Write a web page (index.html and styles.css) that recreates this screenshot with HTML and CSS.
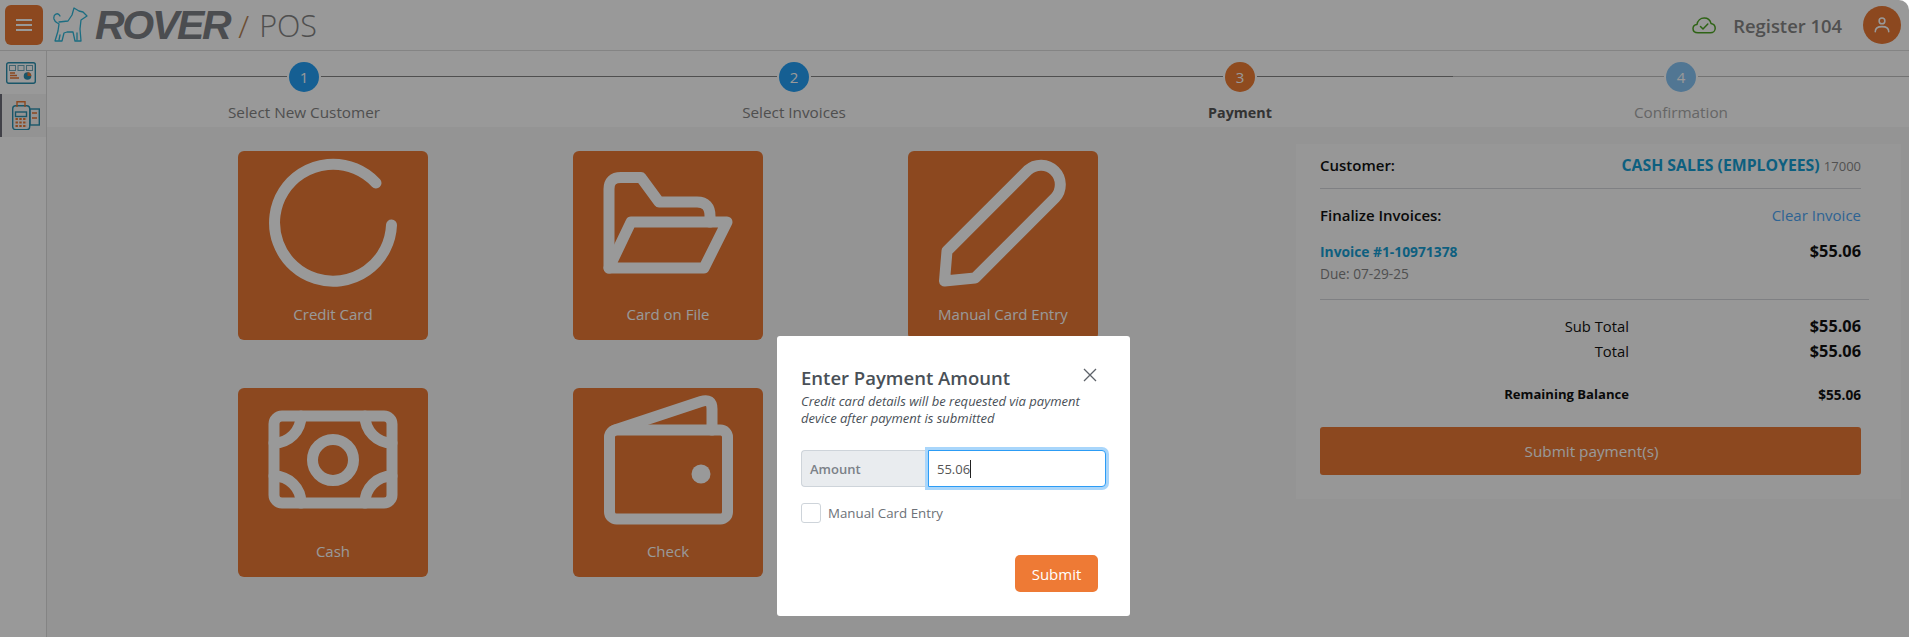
FILE: index.html
```html
<!DOCTYPE html>
<html lang="en">
  <head>
    <meta charset="UTF-8" />
    <meta name="viewport" content="width=device-width, initial-scale=1.0" />
    <title>Rover POS - Payment</title>
    <link rel="stylesheet" href="styles.css">
  </head>
  <body>
    <header class="topbar">
      <button class="menu-btn" aria-label="Menu">
        <span></span><span></span><span></span>
      </button>
      <svg class="dog" viewBox="0 0 36 36" fill="none" stroke-linejoin="round" stroke-linecap="round">
        <path d="M7 9 C5 5 0 7 1 12 C2 16 5 16 6 17 L5 24 L2 34 L9 34 L11 26 L14 25 L20 25 L22 34 L28 34 L27 22 L28 13 L34 9 L30 5 L26 4 L21 1 L19 8 L15 14 L6 15" />
        <path d="M6 33 L7 28 M24 33 L24 26" />
      </svg>
      <div class="brand">
        <span class="brand-name">ROVER</span>
        <span class="brand-slash">/</span>
        <span class="brand-pos">POS</span>
      </div>
      <div class="topbar-right">
        <svg class="cloud" viewBox="0 0 24 17" fill="none" stroke-linejoin="round" stroke-linecap="round">
          <path d="M6 15.8 C3 15.8 1 14 1 11.5 C1 9.2 2.8 7.6 5 7.4 C5.6 3.6 8.6 1 12.2 1 C15.6 1 18.2 3.2 19 6.4 C21.4 6.8 23.2 8.8 23.2 11.2 C23.2 13.8 21.2 15.8 18.4 15.8 Z" />
          <path d="M8.5 9.5 L11 12 L15.8 7" />
        </svg>
        <span class="register">Register 104</span>
        <div class="avatar">
          <svg viewBox="0 0 20 20" fill="none" stroke-linecap="round">
            <circle cx="10" cy="5.5" r="3.2" />
            <path d="M2.5 17.5 C2.5 13.5 5.5 11.8 10 11.8 C14.5 11.8 17.5 13.5 17.5 17.5" />
          </svg>
        </div>
      </div>
    </header>

    <div class="layout">
      <aside class="sidebar">
        <a class="side-item">
          <svg viewBox="0 0 30 22" width="30" height="22">
            <rect x="0.7" y="0.7" width="28.6" height="20.6" rx="2" class="ic-frame" />
            <rect x="3.5" y="3.5" width="6" height="5" class="ic-thin" />
            <rect x="12" y="3.5" width="6" height="5" class="ic-thin" />
            <rect x="20.5" y="3.5" width="6" height="5" class="ic-thin" />
            <path d="M4 11 H9 M4 13.5 H11 M4 16 H13" class="ic-orange" />
            <circle cx="21.5" cy="14" r="3.8" fill="#2a8fb0" />
            <path d="M21.5 14 V10.2 A3.8 3.8 0 0 1 25.3 14 Z" fill="#e97834" />
          </svg>
        </a>
        <a class="side-item active">
          <svg viewBox="0 0 28 29" width="28" height="29">
            <rect x="0.7" y="4.7" width="17" height="24" rx="3" class="ic-frame" />
            <rect x="18" y="8" width="9.3" height="16" class="ic-frame" />
            <path d="M5 6 V0.7 H13 V6" class="ic-orange" />
            <rect x="3.5" y="11" width="11" height="4.5" class="ic-frame" />
            <path d="M3.5 18 H15 M3.5 21.5 H15 M3.5 25 H15" class="ic-dots" />
            <path d="M20 12 H25 M20 17 H25" class="ic-orange" />
          </svg>
        </a>
      </aside>

      <main class="main">
        <div class="stepper">
          <div class="step done">
            <div class="step-num">1</div>
            <div class="step-label">Select New Customer</div>
          </div>
          <div class="step done">
            <div class="step-num">2</div>
            <div class="step-label">Select Invoices</div>
          </div>
          <div class="step current">
            <div class="step-num">3</div>
            <div class="step-label">Payment</div>
          </div>
          <div class="step todo">
            <div class="step-num">4</div>
            <div class="step-label">Confirmation</div>
          </div>
        </div>

        <div class="content">
          <div class="tiles">
            <div class="tile">
              <svg class="tile-icon" viewBox="0 0 130 130">
                <path d="M108 25 A58.5 58.5 0 1 0 123.5 67" />
              </svg>
              <span>Credit Card</span>
            </div>
            <div class="tile">
              <svg class="tile-icon" viewBox="0 0 130 130">
                <path d="M6 110 V31 Q6 19.5 18 19.5 H38 L56 44 H94 Q107 44 107 58 V64" />
                <path d="M28 64 H124 L101 110 H6 Z" />
              </svg>
              <span>Card on File</span>
            </div>
            <div class="tile">
              <svg class="tile-icon" viewBox="0 0 130 130">
                <path d="M6.5 123 L9 93 L89.9 12.2 A19.4 19.4 0 0 1 117.3 39.6 L37 120 Z" />
              </svg>
              <span>Manual Card Entry</span>
            </div>
            <div class="tile">
              <svg class="tile-icon" viewBox="0 0 130 130">
                <rect x="6" y="21" width="118" height="87" rx="8" />
                <circle cx="65" cy="65" r="20.5" />
                <path d="M33 21 A27 27 0 0 1 6 48 M97 21 A27 27 0 0 0 124 48 M6 81 A27 27 0 0 1 33 108 M124 81 A27 27 0 0 0 97 108" />
              </svg>
              <span>Cash</span>
            </div>
            <div class="tile">
              <svg class="tile-icon" viewBox="0 0 130 130">
                <rect x="6.5" y="35" width="118" height="89" rx="7" />
                <path d="M12 35 L98 6.5 Q109 3 109 14 V35" />
                <circle cx="98" cy="79" r="9.5" class="dot" />
              </svg>
              <span>Check</span>
            </div>
          </div>

          <section class="summary">
            <div class="row customer-row">
              <span class="strong">Customer:</span>
              <span><a class="cust-name">CASH SALES (EMPLOYEES)</a> <span class="cust-id">17000</span></span>
            </div>
            <div class="row finalize-row">
              <span class="strong">Finalize Invoices:</span>
              <a class="clear-link">Clear Invoice</a>
            </div>
            <div class="row invoice-row">
              <div>
                <a class="invoice-no">Invoice #1-10971378</a>
                <div class="due">Due: 07-29-25</div>
              </div>
              <span class="amount">$55.06</span>
            </div>
            <div class="totals">
              <div class="total-row"><span>Sub Total</span><span class="amount">$55.06</span></div>
              <div class="total-row"><span>Total</span><span class="amount">$55.06</span></div>
              <div class="total-row balance"><span>Remaining Balance</span><span>$55.06</span></div>
            </div>
            <button class="pay-btn">Submit payment(s)</button>
          </section>
        </div>
      </main>
    </div>

    <div class="overlay">
      <div class="modal">
        <div class="modal-head">
          <h2 class="modal-title">Enter Payment Amount</h2>
          <svg class="modal-close" viewBox="0 0 14 14" fill="none">
            <path d="M1 1 L13 13 M13 1 L1 13" />
          </svg>
        </div>
        <p class="modal-desc">Credit card details will be requested via payment device after payment is submitted</p>
        <div class="input-group">
          <label class="input-label">Amount</label>
          <div class="input-box">55.06<span class="caret"></span></div>
        </div>
        <label class="check-row">
          <input type="checkbox" />
          Manual Card Entry
        </label>
        <div class="modal-foot">
          <button class="submit-btn">Submit</button>
        </div>
      </div>
    </div>
  </body>
</html>
```

FILE: styles.css
```css
* {
  box-sizing: border-box;
}

html,
body {
  height: 100%;
}

body {
  font-family: "Open Sans", "Noto Sans", sans-serif;
  margin: 0;
  padding: 0;
  background-color: #fff;
  color: #848484;
  overflow: hidden;
}

a {
  text-decoration: none;
}

/* top bar */
.topbar {
  height: 51px;
  display: flex;
  align-items: center;
  padding: 0 8px 0 5px;
  border-bottom: 1px solid #dcdcdc;
}

.menu-btn {
  width: 38px;
  height: 40px;
  margin-bottom: 1px;
  padding: 0;
  background-color: #e97834;
  border: none;
  border-radius: 6px;
  display: flex;
  flex-direction: column;
  align-items: center;
  justify-content: center;
  gap: 3px;
}

.menu-btn span {
  width: 16px;
  height: 2px;
  background-color: #fff;
}

.dog {
  width: 36px;
  height: 36px;
  margin-left: 10px;
  stroke: #2fb6d8;
  stroke-width: 1.3;
}

.brand {
  display: flex;
  align-items: center;
  margin-left: 6px;
}

.brand-name {
  font-family: "Liberation Sans", sans-serif;
  font-size: 41px;
  font-weight: 700;
  font-style: italic;
  letter-spacing: -2.3px;
  color: #7e8085;
}

.brand-slash {
  font-size: 32px;
  font-weight: 300;
  color: #b58255;
  margin-left: 9px;
}

.brand-pos {
  font-size: 30.5px;
  font-weight: 300;
  color: #848484;
  margin-left: 10px;
}

.topbar-right {
  margin-left: auto;
  display: flex;
  align-items: center;
}

.cloud {
  width: 24px;
  height: 17px;
  stroke: #4ea624;
  stroke-width: 1.5;
}

.register {
  font-size: 18.4px;
  font-weight: 600;
  color: #858585;
  margin-left: 17px;
}

.avatar {
  width: 38px;
  height: 38px;
  margin-left: 21px;
  margin-bottom: 1px;
  background-color: #e97834;
  border-radius: 50%;
  display: flex;
  align-items: center;
  justify-content: center;
}

.avatar svg {
  width: 18px;
  height: 18px;
  stroke: #fff;
  stroke-width: 1.7;
}

.layout {
  display: flex;
  height: 586px;
}

/* sidebar icons */
.sidebar {
  width: 47px;
  flex-shrink: 0;
  border-right: 1px solid #dcdcdc;
  padding-top: 9px;
}

.side-item {
  height: 26px;
  margin-bottom: 8px;
  display: flex;
  justify-content: center;
  align-items: center;
  padding-right: 5px;
}

.side-item.active {
  height: 43px;
  background-color: #f6f6f6;
  border-left: 2px solid #6d6d78;
  padding-left: 4px;
  padding-right: 0;
}

.ic-frame {
  fill: none;
  stroke: #2a8fb0;
  stroke-width: 1.4;
}

.ic-thin {
  fill: none;
  stroke: #6fa9bd;
  stroke-width: 1;
}

.ic-orange {
  fill: none;
  stroke: #e97834;
  stroke-width: 1.4;
}

.ic-dots {
  fill: none;
  stroke: #e97834;
  stroke-width: 2;
  stroke-dasharray: 2.4 1.4;
}

/* stepper */
.main {
  flex: 1;
  display: flex;
  flex-direction: column;
}

.stepper {
  height: 76px;
  padding-top: 11px;
  display: grid;
  grid-template-columns: 514px 466px 426px 456px;
  background: linear-gradient(to right, #848484 0, #848484 1406px, #c0c0c0 1406px) left 25px / 100% 1px no-repeat;
}

.step {
  display: flex;
  flex-direction: column;
  align-items: center;
}

.step-num {
  width: 30px;
  height: 30px;
  border-radius: 50%;
  font-size: 15px;
  color: #fff;
  display: flex;
  align-items: center;
  justify-content: center;
  box-shadow: 0 0 0 2px #fff;
}

.done .step-num {
  background-color: #239ff5;
}

.current .step-num {
  background-color: #ee7d34;
}

.todo .step-num {
  background-color: #88c5f5;
}

.step-label {
  font-size: 15.3px;
  margin-top: 10px;
}

.current .step-label {
  font-weight: 700;
  font-size: 14.3px;
  margin-top: 11px;
  color: #555;
}

.todo .step-label {
  color: #aaa;
}

/* payment tiles and summary */
.content {
  flex: 1;
  display: grid;
  grid-template-columns: 1249px 605px;
  align-items: start;
  background-color: #f7f7f7;
}

.tiles {
  padding: 24px 0 0 191px;
  display: grid;
  grid-template-columns: repeat(3, 190px);
  grid-auto-rows: 189px;
  column-gap: 145px;
  row-gap: 48px;
}

.tile {
  background-color: #e97834;
  border-radius: 6px;
  color: #fff;
  font-size: 15px;
  display: flex;
  flex-direction: column;
  align-items: center;
  padding-top: 7px;
}

.tile span {
  margin-top: 16px;
}

.tile-icon {
  width: 130px;
  height: 130px;
  fill: none;
  stroke: #fff;
  stroke-width: 11;
  stroke-linecap: round;
  stroke-linejoin: round;
}

.tile-icon .dot {
  fill: #fff;
  stroke: none;
}

.summary {
  margin-top: 17px;
  height: 355px;
  padding: 0 40px 0 24px;
  background-color: #fcfcfc;
  color: #111;
}

.row {
  display: flex;
  justify-content: space-between;
}

.strong {
  font-size: 15px;
  font-weight: 600;
}

.customer-row {
  padding: 10px 0 12px;
  align-items: center;
  border-bottom: 1px solid #d4d6da;
  height: 45px;
}

.cust-name {
  font-size: 15.8px;
  font-weight: 700;
  color: #169fd4;
}

.cust-id {
  font-size: 13px;
  color: #888;
}

.finalize-row {
  margin-top: 16px;
  align-items: center;
}

.clear-link {
  font-size: 15px;
  color: #4ea6f5;
}

.invoice-row {
  margin-top: 15px;
  padding-bottom: 16px;
  margin-right: -8px;
  padding-right: 8px;
  border-bottom: 1px solid #d4d6da;
}

.invoice-no {
  font-size: 13.8px;
  font-weight: 700;
  color: #169fd4;
}

.due {
  font-size: 13.7px;
  color: #848484;
  margin-top: 2px;
}

.amount {
  font-size: 16.3px;
  font-weight: 700;
}

.totals {
  padding-top: 14px;
}

.total-row {
  display: grid;
  grid-template-columns: 309px 232px;
  font-size: 14.8px;
  height: 24.5px;
  align-items: center;
  text-align: right;
}

.balance {
  margin-top: 19px;
  font-size: 13.1px;
  font-weight: 700;
}

.balance span:last-child {
  font-size: 13.6px;
}

.pay-btn {
  width: 100%;
  height: 48px;
  margin-top: 20px;
  padding-left: 8px;
  border: none;
  border-radius: 3px;
  background-color: #e97834;
  color: #fff;
  font-family: inherit;
  font-size: 15.3px;
}

/* modal over a dimmed page */
.overlay {
  position: fixed;
  inset: 0;
  background-color: rgba(0, 0, 0, 0.4);
  border-top-right-radius: 10px;
  display: flex;
  justify-content: center;
  align-items: flex-start;
  padding: 336px 2px 0 0;
}

.modal {
  width: 353px;
  height: 280px;
  background-color: #fff;
  border-radius: 3px;
  padding: 28px 24px 0 24px;
  color: #495057;
}

.modal-head {
  display: flex;
  justify-content: space-between;
  align-items: flex-start;
  padding-right: 9px;
}

.modal-title {
  margin: 0;
  font-size: 18.5px;
  font-weight: 600;
  line-height: 28px;
}

.modal-close {
  width: 14px;
  height: 14px;
  margin-top: 4px;
  stroke: #5d6269;
  stroke-width: 1.3;
}

.modal-desc {
  margin: 1px 0 0;
  font-size: 13px;
  font-style: italic;
  line-height: 17px;
  width: 290px;
}

.input-group {
  display: flex;
  margin-top: 23px;
  height: 37px;
}

.input-label {
  width: 127px;
  background-color: #e9ecef;
  border: 1px solid #ced4da;
  border-right: none;
  border-radius: 4px 0 0 4px;
  font-size: 13px;
  font-weight: 600;
  color: #7b8188;
  display: flex;
  align-items: center;
  padding-left: 8px;
}

.input-box {
  flex: 1;
  border: 1px solid #2c9cf5;
  border-radius: 0 4px 4px 0;
  box-shadow: 0 0 0 3px #a9d6fb;
  font-size: 13px;
  color: #555;
  display: flex;
  align-items: center;
  padding-left: 8px;
  background-color: #fff;
}

.caret {
  width: 1px;
  height: 18px;
  background-color: #222;
}

.check-row {
  display: flex;
  align-items: center;
  gap: 7px;
  margin-top: 16px;
  font-size: 13.3px;
  color: #6d7278;
}

.check-row input {
  appearance: none;
  width: 20px;
  height: 20px;
  margin: 0;
  background-color: #fff;
  border: 1px solid #ced4da;
  border-radius: 3px;
}

.modal-foot {
  display: flex;
  justify-content: flex-end;
  margin-top: 32px;
  padding-right: 8px;
}

.submit-btn {
  width: 83px;
  height: 37px;
  border: none;
  border-radius: 5px;
  background-color: #ee7a35;
  color: #fff;
  font-family: inherit;
  font-size: 15px;
}
```
